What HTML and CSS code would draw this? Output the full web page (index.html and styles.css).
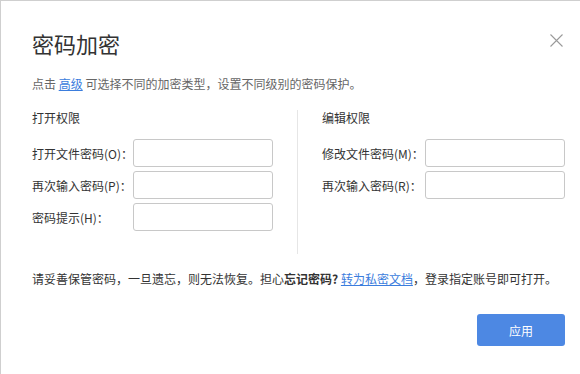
FILE: index.html
```html
<!DOCTYPE html>
<html lang="zh-CN">
<head>
  <meta charset="UTF-8">
  <meta name="viewport" content="width=device-width, initial-scale=1.0">
  <title>密码加密</title>
  <link rel="stylesheet" href="styles.css">
</head>
<body>
  <div class="dialog">
    <div class="dialog-header">
      <h1 class="dialog-title">密码加密</h1>
      <a href="#" class="close-button" title="关闭">
        <svg width="13" height="13" viewBox="0 0 13 13">
          <path d="M0.5 0.5 L12.5 12.5 M12.5 0.5 L0.5 12.5" stroke="#9a9a9a" stroke-width="1.1" fill="none"/>
        </svg>
      </a>
    </div>

    <p class="desc">点击 <a href="#" class="link">高级</a> 可选择不同的加密类型，设置不同级别的密码保护。</p>

    <div class="sections">
      <div class="section section-open">
        <div class="section-title">打开权限</div>
        <div class="form-grid">
          <label class="field-label">打开文件密码(O)：</label>
          <input class="field-input" type="password">
          <label class="field-label">再次输入密码(P)：</label>
          <input class="field-input" type="password">
          <label class="field-label">密码提示(H)：</label>
          <input class="field-input" type="text">
        </div>
      </div>

      <div class="section section-edit">
        <div class="section-title">编辑权限</div>
        <div class="form-grid">
          <label class="field-label">修改文件密码(M)：</label>
          <input class="field-input" type="password">
          <label class="field-label">再次输入密码(R)：</label>
          <input class="field-input" type="password">
        </div>
      </div>
    </div>

    <p class="note">请妥善保管密码，一旦遗忘，则无法恢复。担心<b>忘记密码?</b> <a href="#" class="link">转为私密文档</a>，登录指定账号即可打开。</p>

    <div class="dialog-footer">
      <button class="apply-button">应用</button>
    </div>
  </div>
</body>
</html>
```

FILE: styles.css
```css
html, body {
  margin: 0;
  padding: 0;
  background: #fff;
}

body {
  font-family: "Microsoft YaHei", "Noto Sans CJK SC", "Liberation Sans", sans-serif;
  font-size: 12px;
  color: #333;
}

.dialog {
  width: 580px;
  height: 374px;
  box-sizing: border-box;
  border-top: 1px solid #cfcfcf;
  border-left: 1px solid #cfcfcf;
  padding: 27px 15px 0 31px;
  background: #fff;
}

.dialog-header {
  display: flex;
  justify-content: space-between;
  align-items: flex-start;
}

.dialog-title {
  margin: 0;
  font-size: 22px;
  font-weight: normal;
  line-height: 30px;
  color: #333;
}

.close-button {
  display: block;
  width: 13px;
  height: 13px;
  margin-top: 6px;
  margin-right: 2px;
}

.close-button svg {
  display: block;
}

.desc {
  margin: 16px 0 0;
  line-height: 20px;
  color: #666;
}

.link {
  color: #3b7ddd;
  text-decoration: underline;
}

.sections {
  display: flex;
  margin-top: 16px;
}

.section {
  padding-bottom: 23px;
}

.section-open {
  width: 265px;
  border-right: 1px solid #e6e6e6;
}

.section-edit {
  padding-left: 24px;
}

.section-title {
  line-height: 16px;
  color: #333;
}

.form-grid {
  display: grid;
  grid-template-columns: 101px 140px;
  grid-auto-rows: 28px;
  row-gap: 4px;
  margin-top: 13px;
  align-items: center;
}

.section-edit .form-grid {
  grid-template-columns: 103px 140px;
}

.field-label {
  white-space: nowrap;
  color: #333;
}

.field-input {
  width: 140px;
  height: 28px;
  box-sizing: border-box;
  border: 1px solid #c8c8c8;
  border-radius: 3px;
  padding: 0 6px;
  font: inherit;
  outline: none;
}

.note {
  margin: 15px 0 0;
  line-height: 20px;
  color: #333;
}

.note b {
  font-weight: bold;
}

.dialog-footer {
  display: flex;
  justify-content: flex-end;
  margin-top: 25px;
}

.apply-button {
  width: 88px;
  height: 32px;
  border: none;
  border-radius: 3px;
  background-color: #4d88e3;
  color: #fff;
  font: inherit;
  font-size: 12px;
  cursor: pointer;
}
```
